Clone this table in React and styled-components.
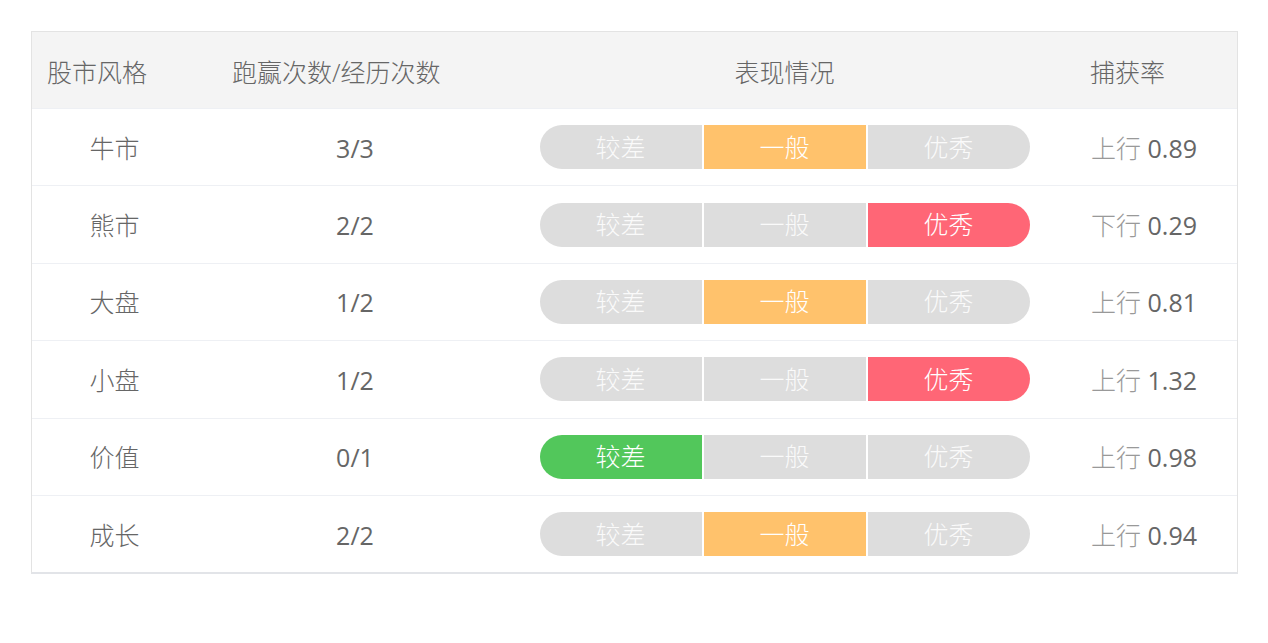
import React from 'react'
import styled, { createGlobalStyle } from 'styled-components'

const GlobalStyle = createGlobalStyle`
  body {
    margin: 0;
    background: #fff;
    font-family: "Open Sans", "Noto Sans CJK SC", sans-serif;
  }
`

const Page = styled.div`
  padding: 31px 30px 0 31px;
`

const Table = styled.div`
  width: 1205px;
  border: 1px solid #e3e3e3;
  border-bottom: 2px solid #e2e4e8;
  color: #666;
  font-size: 25px;
  font-weight: 300;
`

const Row = styled.div`
  display: grid;
  grid-template-columns: 165px 316px 543px 181px;
  height: ${props => (props.head ? '77px' : '77.4px')};
  align-items: center;
  padding-top: ${props => (props.head ? '5px' : '0')};
  box-sizing: border-box;
  border-bottom: 1px solid #eef0f4;
  background: ${props => (props.head ? '#f4f4f4' : '#fff')};

  &:last-child {
    border-bottom: none;
    height: 76.4px;
  }
`

const Cell = styled.div`
  text-align: ${props => props.align || 'center'};
  padding-left: ${props => props.pad || 0}px;
  padding-top: ${props => props.drop || 0}px;
  white-space: nowrap;
  line-height: 1;
`

const Num = styled.span`
  font-weight: 400;
  color: #666;
`

const Bar = styled.div`
  display: flex;
  gap: 2px;
  width: 490px;
  height: 44px;
  margin: 0 auto;
  border-radius: 22px;
  overflow: hidden;
`

const Seg = styled.div`
  flex: 1;
  display: flex;
  align-items: center;
  justify-content: center;
  background: ${props => props.color || '#dddddd'};
  color: ${props => (props.color ? '#fff' : '#fafafa')};
  font-size: 25px;
`

const Dir = styled.span`
  color: #999;
`

const levels = ['较差', '一般', '优秀']
const colors = ['#52c75b', '#ffc26c', '#ff6676']

const rows = [
  { name: '牛市', count: '3/3', level: 1, dir: '上行', rate: '0.89' },
  { name: '熊市', count: '2/2', level: 2, dir: '下行', rate: '0.29' },
  { name: '大盘', count: '1/2', level: 1, dir: '上行', rate: '0.81' },
  { name: '小盘', count: '1/2', level: 2, dir: '上行', rate: '1.32' },
  { name: '价值', count: '0/1', level: 0, dir: '上行', rate: '0.98' },
  { name: '成长', count: '2/2', level: 1, dir: '上行', rate: '0.94' },
]

export default function App() {
  return (
    <Page>
      <GlobalStyle />
      <Table>
        <Row head>
          <Cell align="left" pad={15}>股市风格</Cell>
          <Cell align="left" pad={35}>跑赢次数/经历次数</Cell>
          <Cell>表现情况</Cell>
          <Cell align="left" pad={34}>捕获率</Cell>
        </Row>
        {rows.map(r => (
          <Row key={r.name}>
            <Cell drop={2}>{r.name}</Cell>
            <Cell drop={2}><Num>{r.count}</Num></Cell>
            <Cell>
              <Bar>
                {levels.map((l, i) => (
                  <Seg key={l} color={i === r.level ? colors[i] : null}>{l}</Seg>
                ))}
              </Bar>
            </Cell>
            <Cell align="left" pad={35} drop={2}>
              <Dir>{r.dir}</Dir> <Num>{r.rate}</Num>
            </Cell>
          </Row>
        ))}
      </Table>
    </Page>
  )
}
